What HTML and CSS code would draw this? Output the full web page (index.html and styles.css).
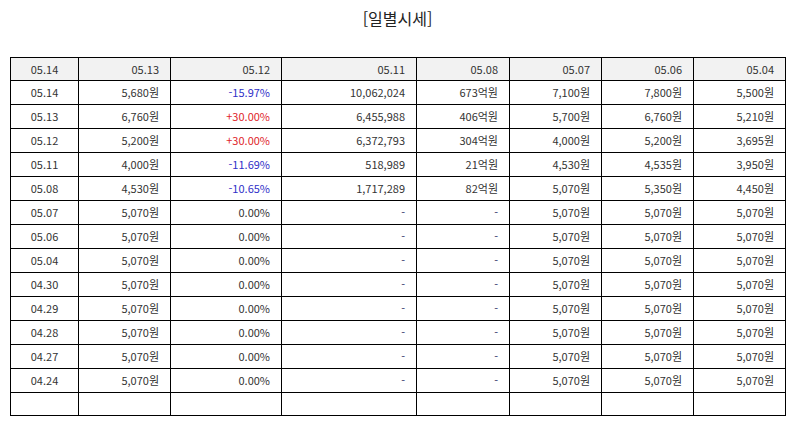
FILE: index.html
```html
<!DOCTYPE html>
<html lang="ko">
<head>
<meta charset="utf-8">
<title>일별시세</title>
<link rel="stylesheet" href="styles.css">
</head>
<body>
<h1 class="title">[일별시세]</h1>
<table class="grid">
  <colgroup>
    <col class="c1"><col class="c2"><col class="c3"><col class="c4"><col class="c5"><col class="c6"><col class="c7"><col class="c8">
  </colgroup>
  <thead>
    <tr><th class="ctr">05.14</th><th>05.13</th><th>05.12</th><th>05.11</th><th>05.08</th><th>05.07</th><th>05.06</th><th>05.04</th></tr>
  </thead>
  <tbody>
    <tr><td class="ctr">05.14</td><td>5,680원</td><td class="dn">-15.97%</td><td>10,062,024</td><td>673억원</td><td>7,100원</td><td>7,800원</td><td>5,500원</td></tr>
    <tr><td class="ctr">05.13</td><td>6,760원</td><td class="up">+30.00%</td><td>6,455,988</td><td>406억원</td><td>5,700원</td><td>6,760원</td><td>5,210원</td></tr>
    <tr><td class="ctr">05.12</td><td>5,200원</td><td class="up">+30.00%</td><td>6,372,793</td><td>304억원</td><td>4,000원</td><td>5,200원</td><td>3,695원</td></tr>
    <tr><td class="ctr">05.11</td><td>4,000원</td><td class="dn">-11.69%</td><td>518,989</td><td>21억원</td><td>4,530원</td><td>4,535원</td><td>3,950원</td></tr>
    <tr><td class="ctr">05.08</td><td>4,530원</td><td class="dn">-10.65%</td><td>1,717,289</td><td>82억원</td><td>5,070원</td><td>5,350원</td><td>4,450원</td></tr>
    <tr><td class="ctr">05.07</td><td>5,070원</td><td>0.00%</td><td class="nil">-</td><td class="nil">-</td><td>5,070원</td><td>5,070원</td><td>5,070원</td></tr>
    <tr><td class="ctr">05.06</td><td>5,070원</td><td>0.00%</td><td class="nil">-</td><td class="nil">-</td><td>5,070원</td><td>5,070원</td><td>5,070원</td></tr>
    <tr><td class="ctr">05.04</td><td>5,070원</td><td>0.00%</td><td class="nil">-</td><td class="nil">-</td><td>5,070원</td><td>5,070원</td><td>5,070원</td></tr>
    <tr><td class="ctr">04.30</td><td>5,070원</td><td>0.00%</td><td class="nil">-</td><td class="nil">-</td><td>5,070원</td><td>5,070원</td><td>5,070원</td></tr>
    <tr><td class="ctr">04.29</td><td>5,070원</td><td>0.00%</td><td class="nil">-</td><td class="nil">-</td><td>5,070원</td><td>5,070원</td><td>5,070원</td></tr>
    <tr><td class="ctr">04.28</td><td>5,070원</td><td>0.00%</td><td class="nil">-</td><td class="nil">-</td><td>5,070원</td><td>5,070원</td><td>5,070원</td></tr>
    <tr><td class="ctr">04.27</td><td>5,070원</td><td>0.00%</td><td class="nil">-</td><td class="nil">-</td><td>5,070원</td><td>5,070원</td><td>5,070원</td></tr>
    <tr><td class="ctr">04.24</td><td>5,070원</td><td>0.00%</td><td class="nil">-</td><td class="nil">-</td><td>5,070원</td><td>5,070원</td><td>5,070원</td></tr>
    <tr class="blank"><td class="ctr">&nbsp;</td><td>&nbsp;</td><td>&nbsp;</td><td>&nbsp;</td><td>&nbsp;</td><td>&nbsp;</td><td>&nbsp;</td><td>&nbsp;</td></tr>
  </tbody>
</table>
</body>
</html>
```
FILE: styles.css
```css
html, body {
  margin: 0;
  padding: 0;
  background: #fff;
}
body {
  padding: 0 9px 0 10px;
  font-family: "Noto Sans CJK KR", "Noto Sans", sans-serif;
  color: #333;
}
.title {
  margin: 0;
  height: 57px;
  padding-top: 7px;
  box-sizing: border-box;
  text-align: center;
  font-size: 16px;
  font-weight: normal;
  line-height: 22px;
  color: #222;
}
.grid {
  width: 775px;
  border-collapse: separate;
  border-spacing: 1px;
  background: #000;
  table-layout: fixed;
  font-size: 11px;
}
.c1 { width: 67px; }
.c2 { width: 91px; }
.c3 { width: 110px; }
.c4 { width: 134px; }
.c5 { width: 92px; }
.c6 { width: 91px; }
.c7 { width: 91px; }
.c8 { width: 91px; }
.grid th, .grid td {
  background: #fff;
  padding: 0 11px 0 4px;
  text-align: right;
  font-weight: normal;
  line-height: 23px;
  white-space: nowrap;
  vertical-align: middle;
}
.grid th {
  background: #f2f2f2;
  line-height: 22px;
}
.grid .ctr {
  text-align: center;
  padding: 0;
}
.up { color: #e0262b; }
.dn { color: #3030c8; }
.nil { color: #33336b; }
.blank td { line-height: 22px; }
```
